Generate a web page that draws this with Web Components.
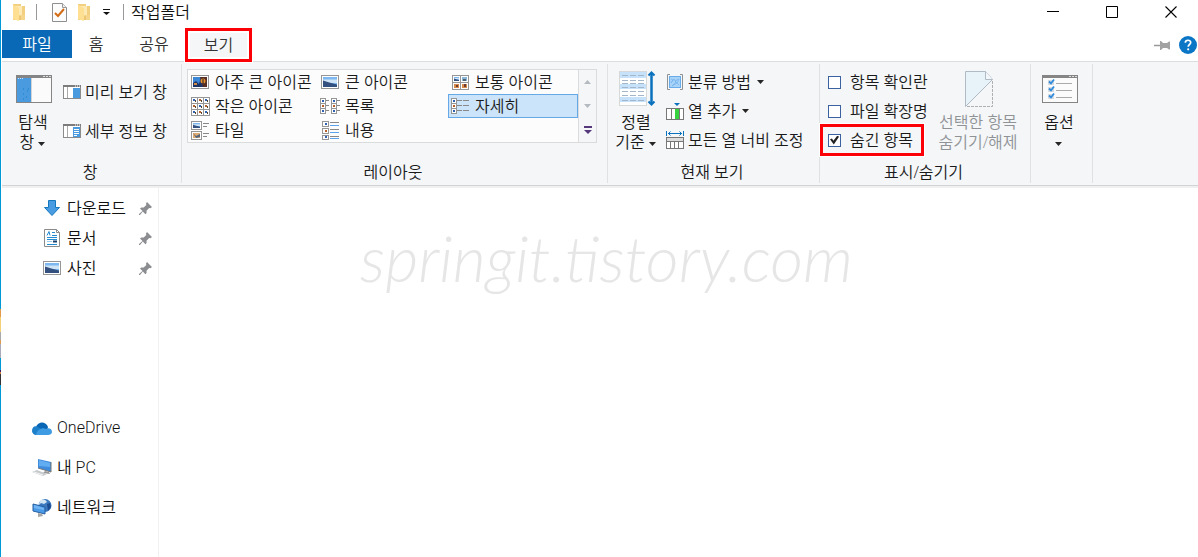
<!DOCTYPE html>
<html lang="ko">
<head>
<meta charset="utf-8">
<title>작업폴더</title>
<style>
  html, body { margin: 0; height: 100%; }
  body { background: #fff; font: 16px/20px "Open Sans", "Noto Sans CJK KR", sans-serif; font-weight: 350; color: #1a1a1a; }
</style>
</head>
<body>
<explorer-window></explorer-window>

<script>
const define = (name, html, setup) => {
  const template = document.createElement('template');
  template.innerHTML = html;
  customElements.define(name, class extends HTMLElement {
    constructor() {
      super();
      this.attachShadow({ mode: 'open' }).append(template.content.cloneNode(true));
    }
    connectedCallback() { if (setup) setup(this, this.shadowRoot); }
  });
};

/* Small picture thumbnails shared by the layout icons */
const scene = (x, y, w, h) => `<rect x="${x}" y="${y}" width="${w}" height="${h}" fill="#7db8f0"/><rect x="${x}" y="${y + h * .25}" width="${w}" height="${h * .35}" fill="#cfe4f6"/><path d="M${x} ${y + h * .35}L${x + w * .45} ${y + h * .55}L${x + w} ${y + h * .75}V${y + h}H${x}Z" fill="#33507f"/>`;
const dots = (x, y, c) => `<rect x="${x}" y="${y}" width="2" height="2" fill="${c}"/>`;
const frame = (x, y, w, h) => `<rect x="${x + .5}" y="${y + .5}" width="${w - 1}" height="${h - 1}" fill="#fff" stroke="#969696"/>`;
const B = '#2f62b0', O = '#b5622a';

const smallGrid = () => {
  let s = '';
  for (let r = 0; r < 3; r++) for (let c = 0; c < 3; c++)
    s += frame(c * 6, r * 6, 7, 7) + dots(c * 6 + 2, r * 6 + 2, (r + c) % 2 ? O : B) + `<rect x="${c * 6 + 4}" y="${r * 6 + 3}" width="1" height="2" fill="#57452f"/>`;
  return s;
};
const listCol = x => [0, 5, 10].map((y, i) => frame(x, y, 6, 6) + dots(x + 2, y + 2, i === 1 ? O : B) + `<path d="M${x + 6} ${y + 2.5}h3" stroke="#888"/>`).join('');

const folder = '<path d="M1 1h8v2h4v14H1z" fill="#f3cf80"/><path d="M3 3h7v13H3z" fill="#fde9b5"/><path d="M1 2l6 3v13l-6-2z" fill="#ffdf91"/><path d="M7 12h6v5H7z" fill="#f6d58d"/><path d="M8 13v4" stroke="#e5b95e"/>';
const pane = '<rect x=".5" y=".5" width="17" height="13" fill="#fff" stroke="#8b8b8b"/><path d="M0 1h18" stroke="#7c7c7c" stroke-width="2"/><path d="M12 1h1m1 0h1m1 0h1" stroke="#fff"/><path d="M4.500 2v11" stroke="#aaa"/><rect x="10" y="3" width="7" height="10" fill="#4a9ae0"/>';
const pushpin = '<path d="M8 0l5 5-1.500 1.200-1.300-.2-2.700 2.700.1 2.300-1.200 1.200-2.600-2.700L1 13H0v-1l3.500-2.900L1 6.600l1.300-1.100 2.400.1L7.300 3 7 1.400z" fill="#8b8d90"/>';

const icons = {
  folder: [14, 19, folder],
  check: [15, 19, '<path d="M.5.5h10l4 4v14H.5z" fill="#fcfcfc" stroke="#8e8e8e"/><path d="M10.500.5v4h4" fill="#eee" stroke="#9a9a9a"/><path d="M3 10l3 3 6-7" fill="none" stroke="#d26b13" stroke-width="2"/>'],
  menu: [7, 6, '<path d="M0 .5h7" stroke="#111"/><path d="M0 3h7L3.500 6z" fill="#111"/>'],
  min: [12, 12, '<path d="M0 5.500h12" stroke="#000"/>'],
  max: [12, 12, '<path d="M.5.5h11v11H.5z" fill="none" stroke="#000"/>'],
  close: [12, 12, '<path d="M.5.5l11 11m0-11l-11 11" stroke="#000" stroke-width="1.100"/>'],
  unpin: [16, 9, '<path d="M0 4.500h6" stroke="#999" stroke-width="1.500"/><path d="M6 0h1l2 2h4l2-1.500h1v8h-1L13 7H9L7 9H6z" fill="#a2a2a2"/>'],
  help: [18, 18, '<circle cx="9" cy="9" r="9" fill="#0b75c6"/><path d="M6.300 6.700c.2-3.300 5.400-3.200 5.400-.2 0 2-2.500 2-2.500 4.300" fill="none" stroke="#fff" stroke-width="1.700"/><circle cx="9.200" cy="13.300" r="1.100" fill="#fff"/>'],
  nav: [36, 28, '<rect x=".5" y=".5" width="35" height="27" fill="#fbfbfb" stroke="#858585"/><path d="M0 1.500h36" stroke="#858585" stroke-width="3"/><path d="M27 1.500h2m1 0h2m1 0h2" stroke="#ddd"/><rect x="1" y="3" width="14" height="24" fill="#4a9ae0"/><path d="M2 3.500h1m1 0h1m1 0h1" stroke="#cfe5fa"/><path d="M15.500 3v24" stroke="#d4d4d4"/><path d="M7 14h1m3 2h1m-5 3h1m2 3h1m-4 2h1m4-10h1" stroke="#1581c4"/>'],
  preview: [18, 14, pane],
  details: [18, 14, pane + '<path d="M11 5.500h5m-5 2h5m-5 2h5m-5 2h3" stroke="#fff"/>'],
  xlarge: [18, 14, frame(0, 0, 18, 14) + '<rect x="2" y="2" width="14" height="10" fill="#3c86d6"/><path d="M2 8l3-2 3 3 2-7h6v10H2z" fill="#1d3566"/><path d="M9 2h7v10h-4z" fill="#552e26"/><circle cx="12" cy="6" r="2.500" fill="#e8902a"/><path d="M12 4v5" stroke="#251e30"/><rect x="3" y="8" width="3" height="2" fill="#d38a45"/>'],
  large: [18, 14, frame(0, 0, 18, 14) + scene(2, 2, 14, 10)],
  medium: [17, 15, frame(0, 0, 9, 8) + frame(8, 0, 9, 8) + frame(0, 7, 9, 8) + frame(8, 7, 9, 8) + scene(2, 2, 5, 4) + '<path d="M10 2h5v4h-5z" fill="#88b5d8"/><path d="M11 4h3v2h-3z" fill="#52616f"/><path d="M2 9h5v4H2zM10 9h5v4h-5z" fill="#d98a48"/><path d="M4 10h2v2H4zM12 9h2v3h-2z" fill="#6a3c33"/>'],
  small: [19, 19, smallGrid()],
  list: [20, 16, listCol(0) + listCol(11)],
  detail: [18, 16, listCol(0) + '<path d="M7 2.500h4m1 0h6m-11 5h4m1 0h6m-11 5h4m1 0h6" stroke="#888"/>'],
  tiles: [18, 19, frame(0, 0, 11, 9) + scene(2, 2, 7, 5) + frame(0, 10, 11, 9) + '<rect x="2" y="12" width="7" height="5" fill="#e0ac71"/><path d="M2 12l3 3 4-2v3l-4 1z" fill="#52647d"/><path d="M12 2.500h6m-6 3h4m-4 7h6m-6 3h4" stroke="#888"/>'],
  content: [17, 19, frame(0, 0, 7, 6) + frame(0, 7, 7, 6) + frame(0, 14, 7, 5) + dots(3, 2, B) + dots(3, 9, O) + dots(3, 15, B) + '<path d="M8 1.500h9m-9 7h9m-9 7h9" stroke="#888"/><path d="M8 4.500h9m-9 7h9m-9 6h9" stroke="#5ba3ec"/>'],
  sort: [36, 36, '<rect x=".5" y=".5" width="27" height="34" fill="#fff" stroke="#b5b5b5" stroke-dasharray="1 1"/><path d="M1 1h26v6H1zM1 13h26v5H1zM1 26h26v5H1z" fill="#c6e2fa"/><path d="M3 4.500h22M3 9.500h22M3 12.500h22M3 16.500h22M3 20.500h22M3 24.500h22M3 29.500h22" stroke="#a3b6ca" stroke-dasharray="6 2"/><path d="M32.500 3v29" stroke="#0a71bd" stroke-width="2.500"/><path d="M29.500 4.500l3-3 3 3m-6 26l3 3 3-3" fill="none" stroke="#0a71bd" stroke-width="2"/>'],
  group: [16, 16, '<path d="M3 .5H.5v15H3M13 .5h2.500v15H13" fill="none" stroke="#8d9296"/><rect x="2.500" y="2.500" width="11" height="11" fill="#a9d2f8" stroke="#68acea"/><path d="M4 5l2 1-2 3 3-4 2 3-4 4 5-3 2-4-4 2 4 4" fill="none" stroke="#75b5ef" stroke-width=".8"/>'],
  column: [18, 17, '<rect x=".5" y="5.500" width="17" height="11" fill="#fff" stroke="#777"/><path d="M5.500 5v12M13.500 5v12" stroke="#777"/><rect x="9" y="6" width="4" height="10" fill="#36d13e"/><path d="M8 0h6l-3 3z" fill="#0a71bd"/>'],
  fit: [18, 18, '<path d="M.5 0v5M17.500 0v5M2 2.500h14M4.500.5l-2 2 2 2M13.500.5l2 2-2 2" fill="none" stroke="#0a71bd"/><rect x=".5" y="6.500" width="17" height="11" fill="#fff" stroke="#777"/><path d="M1 7h16v3H1z" fill="#ddd"/><path d="M0 10.500h18M4.500 10v7M8.500 10v7M12.500 10v7" stroke="#777"/>'],
  hide: [28, 36, '<path d="M.5.5h20l7 7L.5 35.500z" fill="#e7f2f9"/><path d="M.5 35.500V.5h20l7 8-27 27" fill="none" stroke="#b0bac4"/><path d="M20.500.5v8h7" fill="#f3f7fb" stroke="#b0bac4"/><path d="M27.500 10v25.500H2" fill="none" stroke="#b0b0b0" stroke-dasharray="3 1"/>'],
  options: [36, 28, '<rect x=".5" y=".5" width="35" height="27" fill="#fbfbfb" stroke="#858585"/><path d="M0 1.500h36" stroke="#858585" stroke-width="3"/><path d="M27 1.500h2m1 0h2m1 0h2" stroke="#ddd"/><path d="M6 5h6v5H6zM6 12h6v5H6zM6 19h6v5H6z" fill="#d6dce2"/><path d="M7 6.500l2 2 3-4m-5 9l2 2 3-4m-5 9l2 2 3-4" fill="none" stroke="#318bdc" stroke-width="1.800"/><path d="M14 8.500h16m-16 7h16m-16 7h16" stroke="#aaa"/>'],
  caret: [8, 4, '<path d="M0 0h7L3.500 4z" fill="#262626"/>'],
  up: [7, 4, '<path d="M0 4h7L3.500 0z" fill="#b5bac0"/>'],
  down: [7, 4, '<path d="M0 0h7L3.500 4z" fill="#b5bac0"/>'],
  more: [8, 8, '<path d="M0 1h8" stroke="#55387b" stroke-width="2"/><path d="M0 4h8L4 8z" fill="#55387b"/>'],
  download: [16, 16, '<path d="M4.500.5h7v7h4L8 15.500.5 7.500h4z" fill="#4a9ce2" stroke="#1478bf"/>'],
  document: [16, 18, '<path d="M.5.5h12l3 3v14H.5z" fill="#fff" stroke="#8b8b8b"/><path d="M12.500.5v3h3" fill="none" stroke="#8b8b8b"/><path d="M3 6.500l2-4 1 4M8 3.500h3m-3 3h5m-10 2h10m-10 2h10m-10 5h10" fill="none" stroke="#258bd0"/><path d="M3 12.500h5" stroke="#9ccbee"/><path d="M9 12.500h4" stroke="#163f6d" stroke-width="2"/>'],
  pictures: [18, 14, frame(0, 0, 18, 14) + scene(2, 2, 14, 10)],
  pin: [13, 13, pushpin],
  onedrive: [20, 13, '<path d="M4 5C6-1 14-1 16 5l-1 4H3z" fill="#0866b5"/><path d="M0 9c0-4 3-6 6-4l5 3v5H4c-2 0-4-2-4-4z" fill="#1b7fca"/><path d="M4 13c1-6 7-8 10-6 3-2 6 0 6 3 0 2-2 3-4 3z" fill="#3f9be2"/>'],
  pc: [20, 18, '<path d="M6 0l13 3v10L6 9z" fill="#3f8bdd"/><path d="M7 1l11 3v4L7 7z" fill="#62adf2"/><path d="M19 3v10L6 9" fill="none" stroke="#777"/><path d="M13 12l4 1 1 2-7-1z" fill="#999"/><path d="M0 13l5-2 10 4-4 2z" fill="#c6cacd"/><path d="M2 13l9 3" stroke="#f4f4f4"/>'],
  network: [18, 18, '<circle cx="12" cy="6.500" r="6.500" fill="#3b78bd"/><path d="M8 1c3-1 5 0 6 2l-3 2-3-1-2 2c0-2 1-4 2-5z" fill="#d2e6f4"/><path d="M14 5l3-1 1 4-3 4z" fill="#1c4b8f"/><path d="M0 5l12 3v7L0 12z" fill="#4b9be8" stroke="#245f9f"/><path d="M1 6l10 3v2L1 9z" fill="#73b5f2"/><path d="M5 14l4 1 1 2-5 1z" fill="#a6a6a6"/>']
};

define('ui-icon', `<style>:host{display:inline-block;flex:none;line-height:0}svg{display:block;overflow:visible}</style>`, (el, root) => {
  const [w, h, body] = icons[el.getAttribute('name')];
  root.querySelector('svg')?.remove();
  root.append(document.createRange().createContextualFragment(`<svg width="${w}" height="${h}" viewBox="0 0 ${w} ${h}" aria-hidden="true">${body}</svg>`));
});

const reset = `button{appearance:none;border:0;padding:0;margin:0;background:none;font:inherit;color:inherit;cursor:default}`;

define('title-bar', `<style>${reset}
  :host{display:flex;align-items:center;height:24px;margin-bottom:6px;padding-left:10px;color:#111}
  .quick{display:flex;align-items:center}
  .quick button{display:flex}
  i{width:1px;height:16px;background:#999}
  .s1{margin:0 15px 0 10px}.s2{margin:0 7px 0 13px}
  .gap{margin-left:10px}.gap2{margin-left:12px}
  h1{font:inherit;margin:0;flex:1}
  .controls{display:flex;gap:5px}
  .controls button{width:54px;height:24px;display:grid;place-items:center}
</style>
<div class="quick">
  <ui-icon name="folder"></ui-icon><i class="s1"></i>
  <button aria-label="속성"><ui-icon name="check"></ui-icon></button>
  <button class="gap" aria-label="새 폴더"><ui-icon name="folder"></ui-icon></button>
  <button class="gap2" aria-label="빠른 실행 도구 모음 사용자 지정"><ui-icon name="menu"></ui-icon></button><i class="s2"></i>
</div>
<h1>작업폴더</h1>
<div class="controls">
  <button aria-label="최소화"><ui-icon name="min"></ui-icon></button>
  <button aria-label="최대화"><ui-icon name="max"></ui-icon></button>
  <button aria-label="닫기"><ui-icon name="close"></ui-icon></button>
</div>`);

define('tab-strip', `<style>${reset}
  :host{display:flex;align-items:flex-start;height:31px;border-bottom:1px solid #dcdddf}
  button{height:28px;color:#333}
  .file{width:70px;background:#0a69b7;color:#fff}
  .home{width:48px}.share{width:68px}
  .view{width:61px;margin-top:1px;border:2px solid #fff;background:#f4f6f8;box-shadow:0 0 0 3px #fb0007,0 0 0 4px #fff;position:relative;z-index:1;line-height:20px}
  .tools{margin-left:auto;display:flex;align-items:center;gap:9px;height:30px;padding-right:1px}
  .tools button{display:flex;align-items:center}
</style>
<button class="file">파일</button><button class="home">홈</button><button class="share">공유</button><button class="view">보기</button>
<div class="tools"><button aria-label="리본 고정"><ui-icon name="unpin"></ui-icon></button><button aria-label="도움말"><ui-icon name="help"></ui-icon></button></div>`);

define('ribbon-group', `<style>
  :host{display:flex;flex-direction:column;box-sizing:border-box;height:119px;margin:2px 0;border-right:1px solid #e0e1e3}
  .body{flex:1;display:flex;align-items:flex-start;padding-left:var(--start,0)}
  .label{height:22px;line-height:22px;text-align:center;padding-right:3px}
</style><div class="body"><slot></slot></div><div class="label"></div>`, (el, root) => {
  root.querySelector('.label').textContent = el.getAttribute('label') || '';
});

define('big-button', `<style>${reset}
  :host{display:block;width:48px}
  :host([wide]){width:92px;color:#8f9396}
  button{width:100%;display:block;white-space:nowrap}
  .art{height:46px;padding:2px 0 0 2px;display:grid;place-items:center}
</style><button><span class="art"></span><slot></slot></button>`, (el, root) => {
  root.querySelector('button').disabled = el.hasAttribute('wide');
  root.querySelector('.art').innerHTML = `<ui-icon name="${el.getAttribute('icon')}"></ui-icon>`;
});

define('small-button', `<style>${reset}
  :host{display:block}
  button{height:26px;display:flex;align-items:center;gap:4px;white-space:nowrap}
  .art{width:18px;display:grid;place-items:center}
  .caret{margin-left:2px}
</style><button><span class="art"></span><span><slot></slot></span></button>`, (el, root) => {
  root.querySelector('.art').innerHTML = `<ui-icon name="${el.getAttribute('icon')}"></ui-icon>`;
  if (el.hasAttribute('menu')) root.querySelector('button').insertAdjacentHTML('beforeend', '<ui-icon class="caret" name="caret"></ui-icon>');
});

define('check-item', `<style>
  :host{display:block}
  label{display:flex;align-items:center;gap:9px;height:26px;padding:0 8px 0 5px;white-space:nowrap}
  input{appearance:none;flex:none;box-sizing:border-box;width:13px;height:13px;margin:0;border:1px solid #3b61a0;background:#fff;display:grid;place-items:center}
  input:checked::before{content:"";width:9px;height:9px;background:#222;clip-path:polygon(0 42%,22% 34%,38% 58%,82% 0,100% 14%,42% 100%)}
  :host([marked]) label{box-shadow:0 0 0 3px #fb0007,0 0 0 4px #fff;position:relative;z-index:1}
</style><label><input type="checkbox"><span><slot></slot></span></label>`, (el, root) => {
  root.querySelector('input').checked = el.hasAttribute('checked');
});

const views = [['xlarge', '아주 큰 아이콘'], ['large', '큰 아이콘'], ['medium', '보통 아이콘'], ['small', '작은 아이콘'], ['list', '목록'], ['detail', '자세히'], ['tiles', '타일'], ['content', '내용']];
define('view-gallery', `<style>${reset}
  :host{display:flex;margin-top:5px}
  .grid{display:grid;grid-template-columns:repeat(3,130px);grid-auto-rows:24px;border:1px solid #dadbdc;background:#fcfcfd}
  .grid button{display:flex;align-items:center;gap:5px;padding-left:2px;white-space:nowrap}
  .grid button.on{background:#cce4f9;box-shadow:inset 0 0 0 1px #66a9e8}
  .art{width:20px;display:grid;place-items:center}
  .scroll{display:grid;grid-template-rows:repeat(3,24px);width:17px;border:1px solid #dadbdc;border-left:0}
  .scroll button{display:grid;place-items:center}
</style>
<div class="grid">${views.map(([i, t]) => `<button${i === 'detail' ? ' class="on"' : ''}><span class="art"><ui-icon name="${i}"></ui-icon></span><span>${t}</span></button>`).join('')}</div>
<div class="scroll"><button aria-label="위로"><ui-icon name="up"></ui-icon></button><button aria-label="아래로"><ui-icon name="down"></ui-icon></button><button aria-label="자세히"><ui-icon name="more"></ui-icon></button></div>`);

define('ribbon-bar', `<style>
  :host{display:flex;background:#f4f6f8;border-bottom:1px solid #d2d3d4;box-shadow:0 2px 0 #f0f0f0;position:relative}
  .g1{width:180px;--start:7px}.g2{width:426px;--start:5px}.g3{width:212px;--start:4px}.g4{width:211px;--start:3px}.g5{width:62px;--start:4px}
  .rows{display:flex;flex-direction:column;align-items:flex-start;gap:3px;padding:5px 0 0 6px}
  .g1 .rows{gap:13px;padding-top:15px}
  .g4 .rows{padding-left:0;width:109px}
  .drop{display:inline-block;vertical-align:middle}
</style>
<ribbon-group class="g1" label="창">
  <big-button icon="nav">탐색<br>창 <ui-icon class="drop" name="caret"></ui-icon></big-button>
  <div class="rows"><small-button icon="preview">미리 보기 창</small-button><small-button icon="details">세부 정보 창</small-button></div>
</ribbon-group>
<ribbon-group class="g2" label="레이아웃"><view-gallery></view-gallery></ribbon-group>
<ribbon-group class="g3" label="현재 보기">
  <big-button icon="sort">정렬<br>기준 <ui-icon class="drop" name="caret"></ui-icon></big-button>
  <div class="rows"><small-button icon="group" menu>분류 방법</small-button><small-button icon="column" menu>열 추가</small-button><small-button icon="fit">모든 열 너비 조정</small-button></div>
</ribbon-group>
<ribbon-group class="g4" label="표시/숨기기">
  <div class="rows"><check-item>항목 확인란</check-item><check-item>파일 확장명</check-item><check-item checked marked>숨긴 항목</check-item></div>
  <big-button icon="hide" wide>선택한 항목<br>숨기기/해제</big-button>
</ribbon-group>
<ribbon-group class="g5"><big-button icon="options">옵션<br><ui-icon class="drop" name="caret"></ui-icon></big-button></ribbon-group>`);

define('nav-item', `<style>
  :host{display:block}
  a{display:flex;align-items:center;height:30px;padding-left:40px;color:#111;text-decoration:none;white-space:nowrap}
  :host([root]) a{height:40px;padding-left:30px;font-family:Roboto,"Noto Sans CJK KR",sans-serif}
  .art{width:20px;display:grid;place-items:center;margin-right:5px}
  .text{flex:1}
  .pin{margin-right:6px}
</style><a href="#"><span class="art"></span><span class="text"><slot></slot></span></a>`, (el, root) => {
  root.querySelector('.art').innerHTML = `<ui-icon name="${el.getAttribute('icon')}"></ui-icon>`;
  if (el.hasAttribute('pinned')) root.querySelector('a').insertAdjacentHTML('beforeend', '<ui-icon class="pin" name="pin"></ui-icon>');
});

define('side-nav', `<style>
  :host{display:block;box-sizing:border-box;width:157px;padding-top:7px;border-right:1px solid #f0f0f0}
  .roots{margin-top:125px}
</style>
<nav>
  <nav-item icon="download" pinned>다운로드</nav-item><nav-item icon="document" pinned>문서</nav-item><nav-item icon="pictures" pinned>사진</nav-item>
  <div class="roots"><nav-item icon="onedrive" root>OneDrive</nav-item><nav-item icon="pc" root>내 PC</nav-item><nav-item icon="network" root>네트워크</nav-item></div>
</nav>`);

define('explorer-window', `<style>
  :host{display:flex;min-height:100vh}
  .edge{width:1px;margin-right:1px;background:linear-gradient(#0099d8 309px,#e39a4b 309px 317px,#f3d078 317px 332px,#a9a9a9 332px 340px,#dd9a52 340px 344px,#aab 344px 358px,#0099d8 358px 370px,#402060 370px 372px,#d08040 372px 374px,#333 374px 385px,#0099d8 385px)}
  .win{flex:1;min-width:0;display:flex;flex-direction:column}
  .content{flex:1;display:flex}
  main{flex:1;text-align:center;padding:36px 0 0;margin-right:144px}
  .mark{font:italic 300 64px/72px Lato,sans-serif;color:#e6e6e6}
</style>
<div class="edge"></div>
<div class="win">
  <title-bar></title-bar><tab-strip></tab-strip><ribbon-bar></ribbon-bar>
  <div class="content"><side-nav></side-nav><main><div class="mark">springit.tistory.com</div></main></div>
</div>`);
</script>
</body>
</html>
